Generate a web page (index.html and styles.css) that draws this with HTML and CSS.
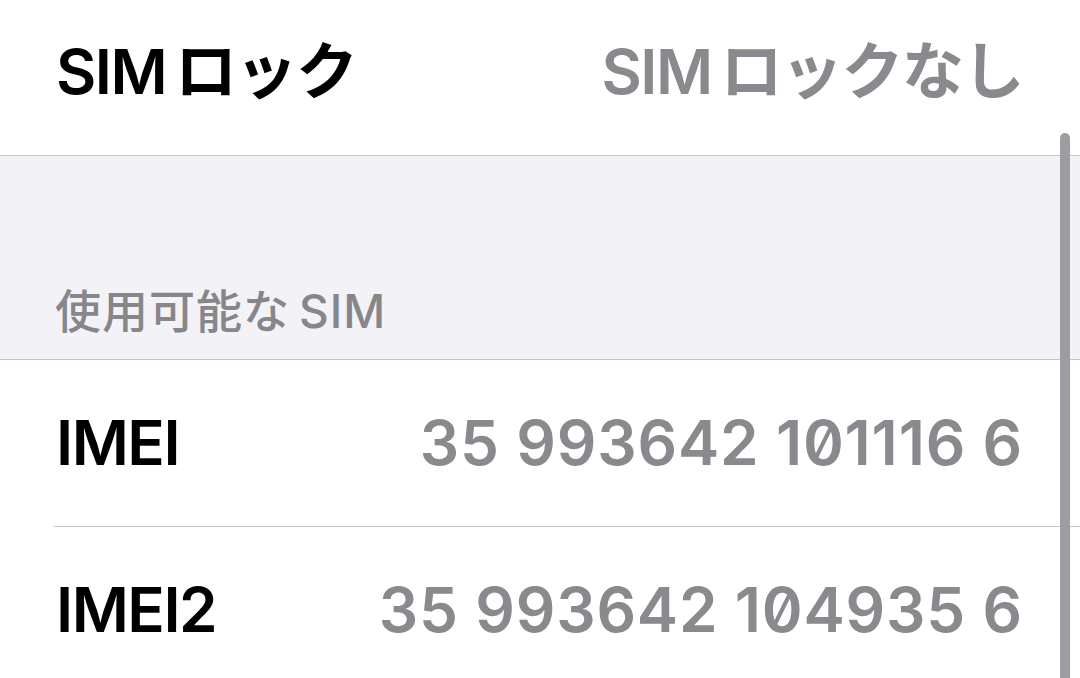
FILE: index.html
```html
<!DOCTYPE html>
<html lang="ja">
<head>
    <meta charset="UTF-8">
    <meta name="viewport" content="width=device-width, initial-scale=1.0">
    <title>情報</title>
    <link rel="stylesheet" href="styles.css">
</head>
<body>
    <div class="screen">
        <div class="list">
            <div class="group group-top">
                <div class="row">
                    <span class="label">SIM&thinsp;ロック</span>
                    <span class="value">SIM&thinsp;ロックなし</span>
                </div>
            </div>

            <div class="section-header">使用可能な&thinsp;SIM</div>

            <div class="group">
                <div class="row">
                    <span class="label">IMEI</span>
                    <span class="value number">35 993642 101116 6</span>
                </div>
                <div class="row">
                    <span class="label">IMEI2</span>
                    <span class="value number">35 993642 104935 6</span>
                </div>
            </div>
        </div>

        <!-- scroll indicator floats over the list -->
        <div class="scroll-indicator"></div>
    </div>
</body>
</html>
```

FILE: styles.css
```css
body, html {
    margin: 0;
    padding: 0;
    background-color: #ffffff;
    font-family: Inter, "Noto Sans CJK JP", sans-serif;
    color: #000000;
    overflow: hidden;
}

.screen {
    position: relative;
    width: 1080px;
    height: 678px;
    overflow: hidden;
}

/* list is scrolled down a little */
.list {
    margin-top: -11px;
}

.group {
    background-color: #ffffff;
}

.group-top {
    border-bottom: 1px solid #c6c6c8;
}

.row {
    position: relative;
    display: flex;
    align-items: center;
    justify-content: space-between;
    height: 166px;
    padding: 0 57px 0 56px;
    font-size: 62px;
    font-weight: 600;
    letter-spacing: -1.5px;
    line-height: 1;
}

.group .row + .row::before {
    content: "";
    position: absolute;
    top: -1px;
    left: 54px;
    right: 0;
    height: 1px;
    background-color: #c6c6c8;
}

.group .row + .row {
    margin-top: 1px;
}

.label {
    color: #000000;
}

.value {
    color: #8a8a8e;
}

.number {
    font-variant-numeric: slashed-zero;
    letter-spacing: 0.8px;
}

.section-header {
    display: flex;
    align-items: flex-end;
    height: 204px;
    box-sizing: border-box;
    padding: 0 0 25px 55px;
    background-color: #f2f2f7;
    border-bottom: 1px solid #c6c6c8;
    color: #86868b;
    font-size: 46px;
    font-weight: 500;
    letter-spacing: 1px;
    line-height: 1;
}

.scroll-indicator {
    position: absolute;
    top: 133px;
    left: 1060px;
    width: 10px;
    height: 545px;
    border-radius: 5px 5px 0 0;
    background-color: #9d9da1;
}
```
